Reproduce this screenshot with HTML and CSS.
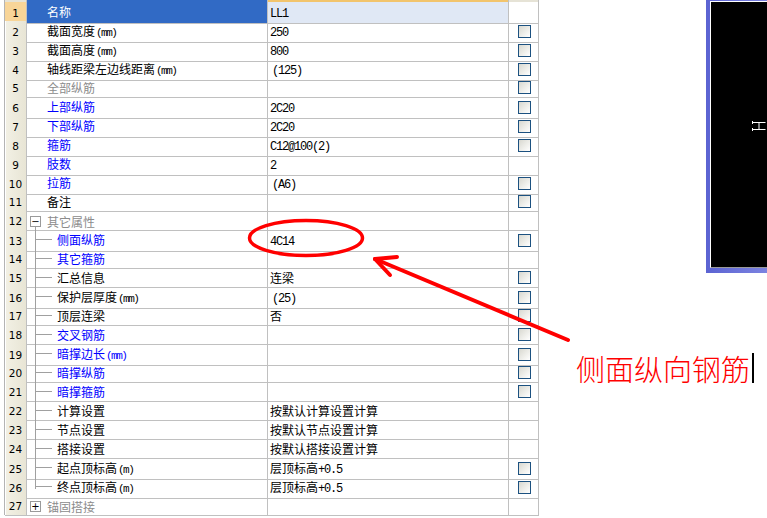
FILE: index.html
```html
<!DOCTYPE html>
<html>
<head>
<meta charset="utf-8">
<link rel="stylesheet" href="styles.css">
</head>
<body>
<div class="grid">
  <div class="row head"><div class="num"></div><div class="name"></div><div class="val"></div><div class="chk"></div></div>
  <div class="row sel"><div class="num">1</div><div class="name">名称</div><div class="val"><span class="a">LL1</span></div><div class="chk"></div></div>
  <div class="row"><div class="num">2</div><div class="name">截面宽度<span class="u">(mm)</span></div><div class="val"><span class="a">250</span></div><div class="chk"><span class="cb"></span></div></div>
  <div class="row"><div class="num">3</div><div class="name">截面高度<span class="u">(mm)</span></div><div class="val"><span class="a">800</span></div><div class="chk"><span class="cb"></span></div></div>
  <div class="row"><div class="num">4</div><div class="name">轴线距梁左边线距离<span class="u">(mm)</span></div><div class="val"><span class="a sp">(125)</span></div><div class="chk"><span class="cb"></span></div></div>
  <div class="row"><div class="num">5</div><div class="name g">全部纵筋</div><div class="val"></div><div class="chk"><span class="cb"></span></div></div>
  <div class="row"><div class="num">6</div><div class="name b">上部纵筋</div><div class="val"><span class="a">2C20</span></div><div class="chk"><span class="cb"></span></div></div>
  <div class="row"><div class="num">7</div><div class="name b">下部纵筋</div><div class="val"><span class="a">2C20</span></div><div class="chk"><span class="cb"></span></div></div>
  <div class="row"><div class="num">8</div><div class="name b">箍筋</div><div class="val"><span class="a">C12@100(2)</span></div><div class="chk"><span class="cb"></span></div></div>
  <div class="row"><div class="num">9</div><div class="name b">肢数</div><div class="val"><span class="a">2</span></div><div class="chk"></div></div>
  <div class="row"><div class="num">10</div><div class="name b">拉筋</div><div class="val"><span class="a sp">(A6)</span></div><div class="chk"><span class="cb"></span></div></div>
  <div class="row"><div class="num">11</div><div class="name">备注</div><div class="val"></div><div class="chk"><span class="cb"></span></div></div>
  <div class="row"><div class="num">12</div><div class="name grp open g"><span class="box">−</span>其它属性</div><div class="val"></div><div class="chk"></div></div>
  <div class="row"><div class="num">13</div><div class="name kid b">侧面纵筋</div><div class="val"><span class="a">4C14</span></div><div class="chk"><span class="cb"></span></div></div>
  <div class="row"><div class="num">14</div><div class="name kid b">其它箍筋</div><div class="val"></div><div class="chk"></div></div>
  <div class="row"><div class="num">15</div><div class="name kid">汇总信息</div><div class="val">连梁</div><div class="chk"><span class="cb"></span></div></div>
  <div class="row"><div class="num">16</div><div class="name kid">保护层厚度<span class="u">(mm)</span></div><div class="val"><span class="a sp">(25)</span></div><div class="chk"><span class="cb"></span></div></div>
  <div class="row"><div class="num">17</div><div class="name kid">顶层连梁</div><div class="val">否</div><div class="chk"><span class="cb"></span></div></div>
  <div class="row"><div class="num">18</div><div class="name kid b">交叉钢筋</div><div class="val"></div><div class="chk"><span class="cb"></span></div></div>
  <div class="row"><div class="num">19</div><div class="name kid b">暗撑边长<span class="u">(mm)</span></div><div class="val"></div><div class="chk"><span class="cb"></span></div></div>
  <div class="row"><div class="num">20</div><div class="name kid b">暗撑纵筋</div><div class="val"></div><div class="chk"><span class="cb"></span></div></div>
  <div class="row"><div class="num">21</div><div class="name kid b">暗撑箍筋</div><div class="val"></div><div class="chk"><span class="cb"></span></div></div>
  <div class="row"><div class="num">22</div><div class="name kid">计算设置</div><div class="val">按默认计算设置计算</div><div class="chk"></div></div>
  <div class="row"><div class="num">23</div><div class="name kid">节点设置</div><div class="val">按默认节点设置计算</div><div class="chk"></div></div>
  <div class="row"><div class="num">24</div><div class="name kid">搭接设置</div><div class="val">按默认搭接设置计算</div><div class="chk"></div></div>
  <div class="row"><div class="num">25</div><div class="name kid">起点顶标高<span class="u">(m)</span></div><div class="val">层顶标高<span class="a">+0.5</span></div><div class="chk"><span class="cb"></span></div></div>
  <div class="row"><div class="num">26</div><div class="name kid last">终点顶标高<span class="u">(m)</span></div><div class="val">层顶标高<span class="a">+0.5</span></div><div class="chk"><span class="cb"></span></div></div>
  <div class="row"><div class="num">27</div><div class="name grp g"><span class="box">+</span>锚固搭接</div><div class="val"></div><div class="chk"></div></div>
</div>

<div class="panel">
  <div class="panel-in">
    <svg class="ibeam" width="61" height="20" viewBox="0 0 61 20">
      <path d="M46.5 2.5H59.5M46.5 9.5H59.5M53 2.5V9.5M46.5 1V4M46.5 8V11" stroke="#fff" stroke-width="1" fill="none"/>
    </svg>
  </div>
</div>

<svg class="mark" width="767" height="518" viewBox="0 0 767 518">
  <ellipse cx="306" cy="238" rx="56.5" ry="17.5" fill="none" stroke="#ff0000" stroke-width="3.5"/>
  <g stroke="#ff0000" stroke-width="4" stroke-linecap="round" fill="none">
    <path d="M568 340L375 259"/>
    <path d="M375 259L397 257"/>
    <path d="M375 259L390 275"/>
  </g>
</svg>

<div class="note"><span class="note-text">侧面纵向钢筋</span><span class="caret"></span></div>
</body>
</html>
```

FILE: styles.css
```css
html, body {
  margin: 0;
  padding: 0;
}
body {
  width: 767px;
  height: 518px;
  overflow: hidden;
  background: #fff;
  position: relative;
  font-family: "Noto Sans CJK SC", sans-serif;
  font-size: 12px;
  color: #000;
}
.grid {
  margin-left: 4px;
  border-left: 1px solid #b4b4b4;
  width: 534px;
}
.row {
  display: grid;
  grid-template-columns: 22px 241px 241px 30px;
  height: 19px;
}
.row > div {
  box-sizing: border-box;
  border-right: 1px solid #c0c0c0;
  border-bottom: 1px solid #c0c0c0;
  display: flex;
  align-items: center;
  position: relative;
  white-space: nowrap;
  line-height: 18px;
}
.row > .name,
.row > .val {
  display: block;
  padding-top: 1px;
  line-height: 17px;
}
.row > .grp {
  display: flex;
  align-items: center;
  padding-top: 1px;
}
.row.head {
  height: 2px;
}
.row.head > div {
  border-bottom: none;
  padding-top: 0;
  background: #e6e3d6;
}
.row.head > .name { background: #316ac5; }
.row.head > .val { background: #f2c46c; }
.row > .num {
  justify-content: center;
  padding-top: 1px;
  background: linear-gradient(to right, #ffffff 0, #ffffff 1px, #f2f0e4 1px, #e8e5d5 100%);
  font-family: "DejaVu Sans", sans-serif;
  font-size: 10.5px;
  color: #000;
}
.row.sel > .num { background: #f8d598; }
.row > .name { padding-left: 20px; }
.row.sel > .name { background: #316ac5; color: #fff; }
.row.sel > .val { background: #e0e8f5; }
.row > .val { padding-left: 2px; }
.chk { padding-left: 9px; }
.cb {
  display: block;
  width: 13px;
  height: 13px;
  box-sizing: border-box;
  border: 1px solid #1c5180;
  background: linear-gradient(135deg, #d8d8d0 0%, #f0f0ec 60%, #ffffff 100%);
}
.g { color: #8c8c8c; }
.b { color: #0000ff; }
.u {
  font-family: "Liberation Mono", monospace;
  font-size: 11px;
  letter-spacing: -1.5px;
  margin-left: 1px;
}
.a {
  font-family: "Liberation Mono", monospace;
  font-size: 12px;
  letter-spacing: -1.2px;
}
.sp { margin-left: 2px; }
.row > .kid { padding-left: 30px; }
.kid::before {
  content: "";
  position: absolute;
  left: 8px;
  top: 0;
  bottom: -1px;
  border-left: 1px solid #a0a0a0;
}
.kid.last::before { bottom: 9px; }
.kid::after {
  content: "";
  position: absolute;
  left: 8px;
  width: 17px;
  top: 9px;
  border-top: 1px solid #a0a0a0;
}
.row > .grp { padding-left: 3px; }
.grp.open::before {
  content: "";
  position: absolute;
  left: 8px;
  top: 16px;
  bottom: -1px;
  border-left: 1px solid #a0a0a0;
}
.box {
  width: 11px;
  height: 11px;
  box-sizing: border-box;
  border: 1px solid #9a9a9a;
  background: #fff;
  margin-right: 6px;
  display: flex;
  align-items: center;
  justify-content: center;
  font-family: "DejaVu Sans", sans-serif;
  font-size: 10px;
  line-height: 9px;
  color: #000;
}
.panel {
  position: absolute;
  left: 706px;
  top: 0;
  width: 61px;
  height: 273px;
  box-sizing: border-box;
  padding: 1px 0 5px 4px;
  background: linear-gradient(to right, #5b63d2, #7c83e0);
}
.panel-in {
  height: 100%;
  box-sizing: border-box;
  background: #000;
  border-top: 1px solid #fff;
  border-left: 1px solid #fff;
  border-bottom: 1px solid #9a9a9a;
  position: relative;
}
.ibeam {
  position: absolute;
  left: -5px;
  top: 118px;
}
.mark {
  position: absolute;
  left: 0;
  top: 0;
  pointer-events: none;
}
.note {
  position: absolute;
  left: 576px;
  top: 352px;
  display: flex;
  align-items: center;
}
.note-text {
  font-family: "Noto Sans CJK SC", sans-serif;
  font-weight: 300;
  font-size: 29px;
  line-height: 32px;
  color: #ff0000;
}
.caret {
  width: 2px;
  height: 30px;
  background: #000;
  margin-left: 2px;
}
```
